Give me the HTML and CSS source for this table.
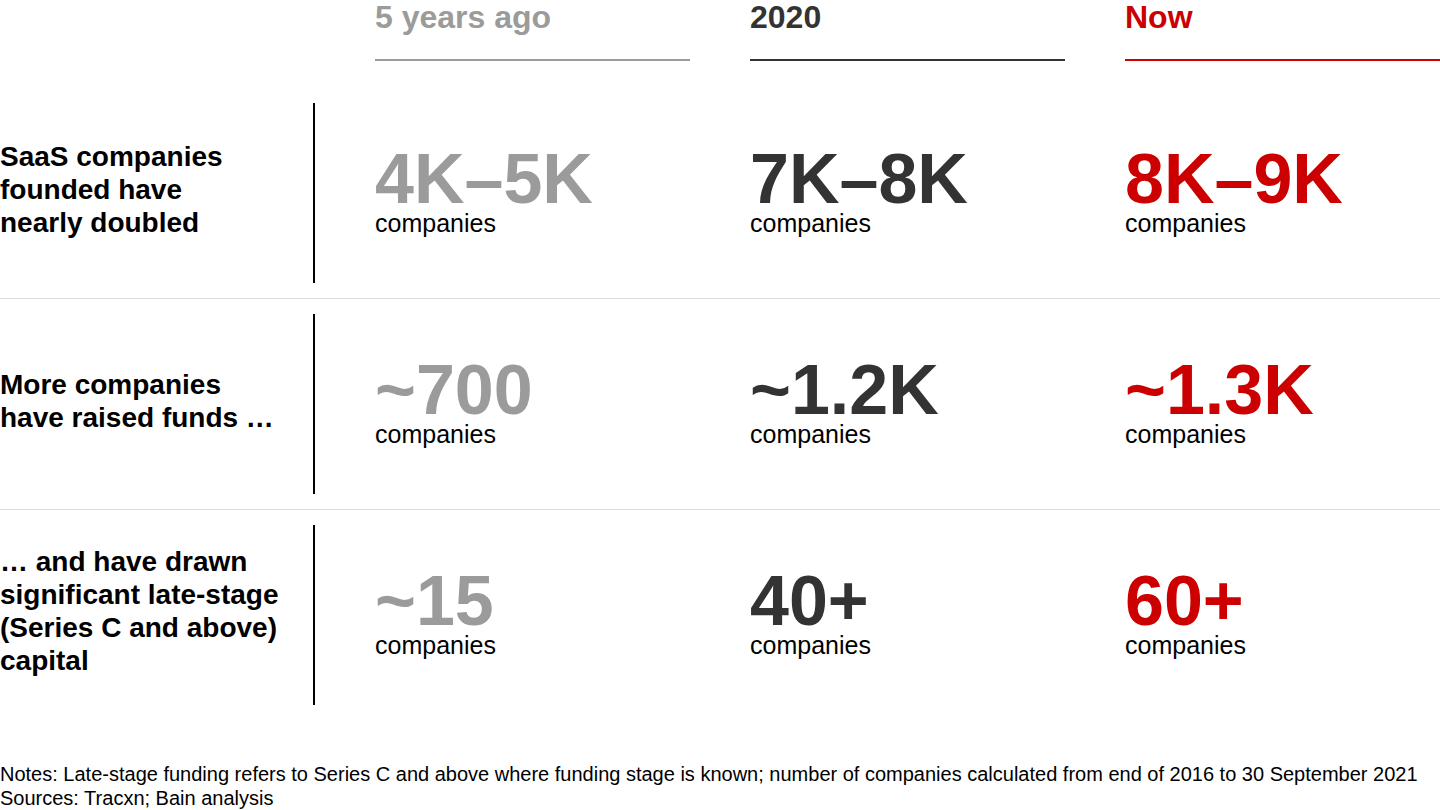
FILE: index.html
```html
<!DOCTYPE html>
<html lang="en">
<head>
<meta charset="utf-8">
<title>SaaS companies</title>
<link rel="stylesheet" href="styles.css">
</head>
<body>
<div class="page">
  <div class="grid header">
    <div class="hcell empty"></div>
    <div class="hcell past">5 years ago</div>
    <div class="hcell mid">2020</div>
    <div class="hcell now">Now</div>
  </div>

  <div class="grid row divided">
    <div class="label"><div class="label-text">SaaS companies<br>founded have<br>nearly doubled</div></div>
    <div class="stat past"><div class="num">4K–5K</div><div class="unit">companies</div></div>
    <div class="stat mid"><div class="num">7K–8K</div><div class="unit">companies</div></div>
    <div class="stat now"><div class="num">8K–9K</div><div class="unit">companies</div></div>
  </div>

  <div class="grid row divided">
    <div class="label"><div class="label-text">More companies<br>have raised funds …</div></div>
    <div class="stat past"><div class="num">~700</div><div class="unit">companies</div></div>
    <div class="stat mid"><div class="num">~1.2K</div><div class="unit">companies</div></div>
    <div class="stat now"><div class="num">~1.3K</div><div class="unit">companies</div></div>
  </div>

  <div class="grid row">
    <div class="label"><div class="label-text last">… and have drawn<br>significant late-stage<br>(Series C and above)<br>capital</div></div>
    <div class="stat past"><div class="num">~15</div><div class="unit">companies</div></div>
    <div class="stat mid"><div class="num">40+</div><div class="unit">companies</div></div>
    <div class="stat now"><div class="num">60+</div><div class="unit">companies</div></div>
  </div>

  <div class="notes">
    <p>Notes: Late-stage funding refers to Series C and above where funding stage is known; number of companies calculated from end of 2016 to 30 September 2021</p>
    <p>Sources: Tracxn; Bain analysis</p>
  </div>
</div>
</body>
</html>
```
FILE: styles.css
```css
html, body {
  margin: 0;
  padding: 0;
  background: #ffffff;
}

body {
  font-family: "Liberation Sans", Arial, sans-serif;
  color: #000000;
  width: 1440px;
  height: 810px;
  overflow: hidden;
}

.page {
  width: 1440px;
}

.grid {
  display: grid;
  grid-template-columns: 315px 315px 315px 315px;
  column-gap: 60px;
}

.header {
  margin-bottom: 27px;
}

.hcell {
  font-size: 32px;
  font-weight: bold;
  line-height: 34px;
  height: 34px;
  padding-bottom: 25px;
  border-bottom: 2px solid transparent;
}

.hcell.empty {
  border-bottom: none;
}

.hcell.past {
  color: #9b9b9b;
  border-bottom-color: #9b9b9b;
}

.hcell.mid {
  color: #333333;
  border-bottom-color: #333333;
}

.hcell.now {
  color: #cc0000;
  border-bottom-color: #cc0000;
}

.row {
  padding: 15px 0;
}

.row.divided {
  border-bottom: 1px solid #dddddd;
}

.label {
  height: 180px;
  border-right: 2px solid #000000;
  display: flex;
  align-items: center;
}

.label-text {
  font-size: 28px;
  font-weight: bold;
  line-height: 33px;
  padding-bottom: 7px;
}

.label-text.last {
  padding-bottom: 9px;
}

.stat {
  height: 180px;
  display: flex;
  flex-direction: column;
  justify-content: center;
}

.num {
  font-size: 70px;
  font-weight: bold;
  line-height: 60px;
}

.unit {
  font-size: 25px;
  line-height: 28px;
  color: #000000;
}

.stat.past .num {
  color: #9b9b9b;
}

.stat.mid .num {
  color: #333333;
}

.stat.now .num {
  color: #cc0000;
}

.notes {
  margin-top: 42px;
  font-size: 20px;
  line-height: 24px;
}

.notes p {
  margin: 0;
  white-space: nowrap;
}
```
